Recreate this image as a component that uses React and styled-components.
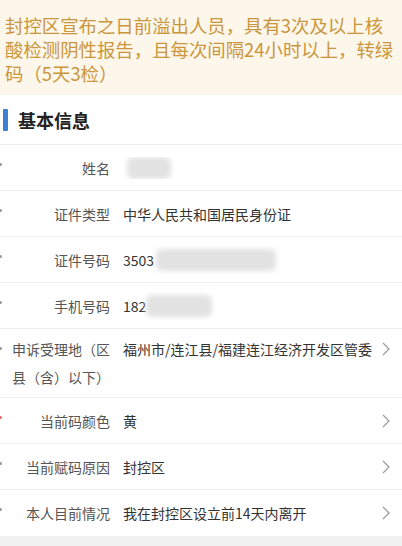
import React from "react";
import styled, { createGlobalStyle } from "styled-components";

const Global = createGlobalStyle`
  html, body {
    margin: 0;
    padding: 0;
    background: #f1f1f1;
  }
  body {
    font-family: "Noto Sans CJK SC", "Noto Sans", sans-serif;
  }
`;

const Page = styled.div`
  width: 402px;
  display: flex;
  flex-direction: column;
`;

const Notice = styled.div`
  background: #fdf6ea;
  color: #c9963d;
  font-size: 18.4px;
  line-height: 24px;
  padding: 13px 8px 10px 5px;
`;

const Card = styled.div`
  background: #fff;
  display: flex;
  flex-direction: column;
`;

const SectionHead = styled.div`
  height: 50px;
  display: flex;
  align-items: center;
  gap: 10px;
  border-bottom: 1px solid #eeeeee;
  box-sizing: border-box;
  font-size: 18px;
  font-weight: 700;
  color: #222;
  padding-left: 3px;
`;

const Bar = styled.span`
  width: 5px;
  height: 22px;
  background: #3d7fd0;
  border-radius: 1px;
`;

const Row = styled.div`
  display: flex;
  align-items: ${(p) => (p.$multi ? "flex-start" : "center")};
  min-height: ${(p) => (p.$multi ? 68 : 46)}px;
  box-sizing: border-box;
  padding: 6px 0;
  border-bottom: ${(p) => (p.$last ? "none" : "1px solid #efefef")};
  font-size: 14px;
  line-height: 28px;
`;

const Dot = styled.span`
  width: 3px;
  height: 3px;
  margin: 12px 0 0 -1px;
  border-radius: 50%;
  background: ${(p) => (p.$red ? "#e06a6a" : "#999")};
  align-self: flex-start;
  flex-shrink: 0;
`;

const Label = styled.div`
  width: ${(p) => (p.$multi ? 100 : 98)}px;
  margin-left: 10px;
  text-align: ${(p) => (p.$multi ? "left" : "right")};
  color: #555;
  flex-shrink: 0;
`;

const Value = styled.div`
  flex: 1;
  margin-left: ${(p) => (p.$multi ? 11 : 13)}px;
  color: #333;
  white-space: nowrap;
  overflow: hidden;
  display: flex;
  align-items: center;
`;

const Blur = styled.span`
  display: inline-block;
  width: ${(p) => p.$w}px;
  height: 22px;
  margin-left: ${(p) => p.$ml || 0}px;
  background: #e2e2e2;
  border-radius: 6px;
  filter: blur(2.5px);
`;

const Arrow = styled.svg`
  width: 10px;
  height: 28px;
  margin: 0 11px 0 6px;
  flex-shrink: 0;
`;

const Bottom = styled.div`
  height: 12px;
  background: #f1f1f1;
`;

const Chevron = () => (
  <Arrow viewBox="0 0 10 28">
    <path d="M2 8 L8 14 L2 20" fill="none" stroke="#9a9a9a" strokeWidth="1.2" />
  </Arrow>
);

const rows = [
  { label: "姓名", value: <Blur $w={44} $ml={4} /> },
  { label: "证件类型", value: "中华人民共和国居民身份证" },
  { label: "证件号码", value: <>3503<Blur $w={120} $ml={2} /></> },
  { label: "手机号码", value: <>182<Blur $w={66} /></> },
  { label: "申诉受理地（区县（含）以下）", value: "福州市/连江县/福建连江经济开发区管委", arrow: true, multi: true },
  { label: "当前码颜色", value: "黄", arrow: true, red: true },
  { label: "当前赋码原因", value: "封控区", arrow: true },
  { label: "本人目前情况", value: "我在封控区设立前14天内离开", arrow: true, last: true },
];

export default function App() {
  return (
    <Page>
      <Global />
      <Notice>
        封控区宣布之日前溢出人员，具有3次及以上核酸检测阴性报告，且每次间隔24小时以上，转绿码（5天3检）
      </Notice>
      <Card>
        <SectionHead>
          <Bar />
          基本信息
        </SectionHead>
        {rows.map((r) => (
          <Row key={r.label} $multi={r.multi} $last={r.last}>
            <Dot $red={r.red} />
            <Label $multi={r.multi}>{r.label}</Label>
            <Value $multi={r.multi}>{r.value}</Value>
            {r.arrow && <Chevron />}
          </Row>
        ))}
      </Card>
      <Bottom />
    </Page>
  );
}
